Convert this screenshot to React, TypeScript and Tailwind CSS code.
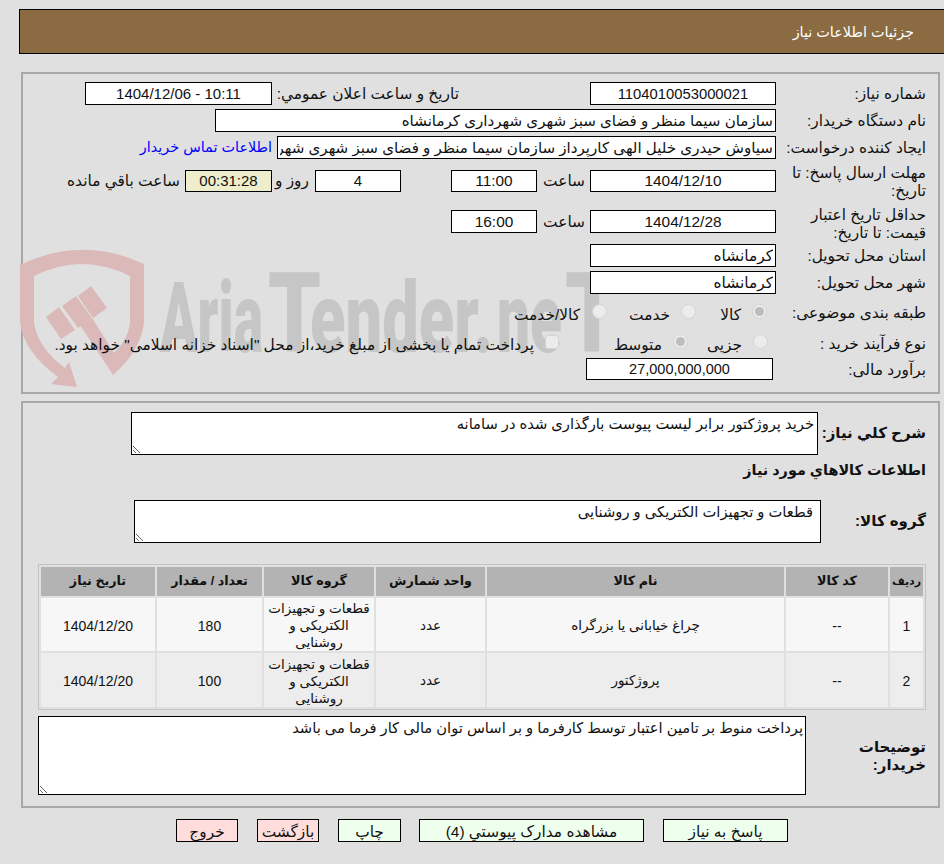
const font = "font-['Tahoma','Liberation_Sans','DejaVu_Sans',sans-serif]";

function Field({ value, short, yellow, className = '' }: { value: string; short?: boolean; yellow?: boolean; className?: string }) {
  return (
    <input
      readOnly
      value={value}
      className={`${short ? 'h-[22px]' : 'h-[23px]'} ${yellow ? 'bg-[#eeeecc]' : 'bg-white'} shrink-0 border border-black px-[2px] outline-none ${className}`}
    />
  );
}

function Label({ children, className = 'leading-[23px]' }: { children: React.ReactNode; className?: string }) {
  return <div className={`w-[150px] shrink-0 pl-[10px] ${className}`}>{children}</div>;
}

function Radio({ checked }: { checked?: boolean }) {
  return (
    <span className="mt-[4px] flex h-[15px] w-[15px] shrink-0 items-center justify-center rounded-full border border-[#d4d4d4] bg-[#ececec]">
      {checked && <span className="h-[9px] w-[9px] rounded-full bg-[#bdbdbd]" />}
    </span>
  );
}

// logo behind the first panel
function Watermark() {
  return (
    <svg className="pointer-events-none absolute left-[-3px] top-[166px]" width="620" height="150" viewBox="0 0 620 150">
      <g fill="#dcb9b9">
        <path d="M0 25 Q62 -5 124 24 L124 83 Q120 112 93 135 L60 85 L72 78 L94 113 Q108 100 110 83 L110 36 Q62 12 14 36 L14 83 Q18 108 45 128 L49 122 L57 147 L31 144 L38 137 Q4 112 0 83 Z" />
        <path d="M26 77 L39 67 L55 90 L41 99 Z" />
        <path d="M42 66 L56 56 L72 78 L58 88 Z" />
        <path d="M58 56 L71 46 L87 68 L73 78 Z" />
      </g>
      <g direction="ltr" fill="#c6c6c6" fontFamily="Roboto" fontWeight="900" fontSize="98">
        <text x="140" y="112" textLength="103" lengthAdjust="spacingAndGlyphs">Aria</text>
        <text x="248" y="112" fontSize="112" textLength="53" lengthAdjust="spacingAndGlyphs">T</text>
        <text x="290" y="112" textLength="183" lengthAdjust="spacingAndGlyphs">ender.</text>
        <text x="477" y="112" textLength="65" lengthAdjust="spacingAndGlyphs">ne</text>
        <text x="545" y="112" fontSize="112" textLength="54" lengthAdjust="spacingAndGlyphs">T</text>
      </g>
    </svg>
  );
}

const rows = [
  { n: '1', name: 'چراغ خیابانی یا بزرگراه', qty: '180' },
  { n: '2', name: 'پروژکتور', qty: '100' },
];

export default function App() {
  return (
    <div dir="rtl" className={`${font} relative h-[864px] w-[944px] overflow-hidden bg-[#e0e0e0] text-[15.4px] text-[#111]`}>
      <div className="ml-[19px] mt-[9px] h-[45px] border border-r-0 border-black bg-[#8b6b42] pr-[30px] text-[14.4px] leading-[44px] text-white">
        جزئیات اطلاعات نیاز
      </div>

      {/* top panel */}
      <div className="relative ml-[21px] mr-[4px] mt-[18px] h-[322px] border-2 border-[#a8a8a8] pr-[12px] pt-[8px]">
        <Watermark />
        <div className="relative flex flex-col">
          <div className="flex h-[27px] items-start">
            <Label>شماره نیاز:</Label>
            <Field value="1104010053000021" className="w-[186px] text-center text-[14.8px]" />
            <div className="mr-[131px] w-[181px] whitespace-nowrap leading-[23px]">تاریخ و ساعت اعلان عمومي:</div>
            <Field value="10:11 - 1404/12/06" className="mr-[6px] w-[187px] text-center text-[15px]" />
          </div>
          <div className="flex h-[27px] items-start">
            <Label>نام دستگاه خریدار:</Label>
            <Field value="سازمان سیما منظر و فضای سبز شهری شهرداری کرمانشاه" className="w-[561px] text-[15.1px]" />
          </div>
          <div className="flex h-[34px] items-start">
            <Label>ایجاد کننده درخواست:</Label>
            <Field value="سیاوش حیدری خلیل الهی کارپرداز سازمان سیما منظر و فضای سبز شهری شهرداری کرمانشاه" className="w-[499px] text-[15.1px]" />
            <a className="mr-[5px] whitespace-nowrap text-[14.4px] leading-[23px] text-[#0000ff]">اطلاعات تماس خریدار</a>
          </div>
          <div className="flex h-[40px] items-start">
            <Label className="mt-[-6px] leading-[18px]">مهلت ارسال پاسخ: تا تاریخ:</Label>
            <Field short value="1404/12/10" className="w-[186px] text-center" />
            <div className="mr-[5px] w-[48px] leading-[22px]">ساعت</div>
            <Field short value="11:00" className="w-[86px] text-center" />
            <Field short value="4" className="mr-[50px] w-[86px] text-center text-[15px]" />
            <div className="mr-[6px] w-[33px] whitespace-nowrap leading-[22px]">روز و</div>
            <Field short yellow value="00:31:28" className="mr-[4px] w-[87px] text-center text-[15px]" />
            <div className="mr-[5px] whitespace-nowrap leading-[22px]">ساعت باقي مانده</div>
          </div>
          <div className="flex h-[34px] items-start">
            <Label className="mt-[-4px] leading-[18px]">حداقل تاریخ اعتبار قیمت: تا تاریخ:</Label>
            <Field value="1404/12/28" className="w-[186px] text-center" />
            <div className="mr-[5px] w-[48px] leading-[23px]">ساعت</div>
            <Field value="16:00" className="w-[86px] text-center" />
          </div>
          <div className="flex h-[27px] items-start">
            <Label>استان محل تحویل:</Label>
            <Field value="کرمانشاه" className="w-[186px]" />
          </div>
          <div className="flex h-[29px] items-start">
            <Label>شهر محل تحویل:</Label>
            <Field value="کرمانشاه" className="w-[186px]" />
          </div>
          <div className="flex h-[30px] items-start">
            <Label className="mt-[1px] leading-[23px]">طبقه بندی موضوعی:</Label>
            <div className="mr-[9px] flex"><Radio checked /></div>
            <div className="mr-[11px] mt-[4px] w-[45px] leading-[22px]">کالا</div>
            <Radio />
            <div className="mr-[11px] mt-[4px] w-[63px] leading-[22px]">خدمت</div>
            <Radio />
            <div className="mr-[12px] mt-[4px] whitespace-nowrap leading-[22px]">کالا/خدمت</div>
          </div>
          <div className="flex h-[28px] items-start">
            <Label className="mt-[2px] leading-[23px]">نوع فرآیند خرید :</Label>
            <div className="mr-[8px] flex"><Radio /></div>
            <div className="mr-[11px] mt-[4px] w-[54px] leading-[22px]">جزیی</div>
            <Radio checked />
            <div className="mr-[11px] mt-[4px] w-[103px] leading-[22px]">متوسط</div>
            <span className="mt-[5px] h-[14px] w-[14px] shrink-0 rounded-[3px] border border-[#d4d4d4] bg-[#ececec]" />
            <div className="mr-[11px] mt-[4px] whitespace-nowrap leading-[22px]">پرداخت تمام یا بخشی از مبلغ خرید،از محل "اسناد خزانه اسلامی" خواهد بود.</div>
          </div>
          <div className="flex items-start">
            <Label>برآورد مالی:</Label>
            <Field short value="27,000,000,000" className="mr-[3px] w-[187px] text-center text-[14.5px]" />
          </div>
        </div>
      </div>

      {/* details panel */}
      <div className="ml-[21px] mr-[4px] mt-[7px] h-[407px] border-2 border-[#a8a8a8] pr-[12px] pt-[9px]">
        <div className="flex h-[43px] items-center">
          <div className="w-[108px] shrink-0 text-[15px] font-bold">شرح کلي نیاز:</div>
          <textarea readOnly value="خرید پروژکتور برابر لیست پیوست بارگذاری شده در سامانه" className="h-[43px] w-[687px] border border-black bg-white px-[3px] text-[14.7px] outline-none" />
        </div>
        <div className="mt-[5px] h-[40px] text-[14.4px] font-bold leading-[20px]">اطلاعات کالاهاي مورد نیاز</div>
        <div className="flex h-[43px] items-center">
          <div className="w-[105px] shrink-0 text-[15px] font-bold">گروه کالا:</div>
          <textarea readOnly value="قطعات و تجهیزات الکتریکی و روشنایی" className="h-[43px] w-[687px] border border-black bg-white px-[7px] text-[14.7px] outline-none" />
        </div>
        <table className="mt-[21px] w-[888px] table-fixed border-separate border-spacing-[2px] border border-[#c4c4c4] text-center text-[13.5px]">
          <thead>
            <tr className="h-[29px] bg-[#b3b3b3] text-[12.7px] font-bold">
              <th className="w-[33px] p-0 text-[11px]">ردیف</th>
              <th className="w-[102px] p-0">کد کالا</th>
              <th className="w-[297px] p-0">نام کالا</th>
              <th className="w-[109px] p-0">واحد شمارش</th>
              <th className="w-[110px] p-0">گروه کالا</th>
              <th className="w-[105px] p-0">تعداد / مقدار</th>
              <th className="p-0">تاریخ نیاز</th>
            </tr>
          </thead>
          <tbody>
            {rows.map((row, i) => (
              <tr key={row.n} className={i === 0 ? 'h-[53px] bg-[#f7f7f7]' : 'h-[54px] bg-[#ededed]'}>
                <td className="px-0 pb-0 pt-[3px] text-[14px]">{row.n}</td>
                <td className="px-0 pb-0 pt-[3px] text-[14px]">--</td>
                <td className="px-0 pb-0 pt-[3px]">{row.name}</td>
                <td className="px-0 pb-0 pt-[3px]">عدد</td>
                <td className="px-[2px] pb-0 pt-[2px] leading-[17px]">قطعات و تجهیزات الکتریکی و روشنایی</td>
                <td className="px-0 pb-0 pt-[3px] text-[14px]">{row.qty}</td>
                <td className="px-0 pb-0 pt-[3px] text-[14px]">1404/12/20</td>
              </tr>
            ))}
          </tbody>
        </table>
        <div className="mt-[6px] flex items-center">
          <div className="w-[120px] shrink-0 pl-[30px] text-[15px] font-bold leading-[18px]">توضیحات خریدار:</div>
          <textarea readOnly value="پرداخت منوط بر تامین اعتبار توسط کارفرما و بر اساس توان مالی کار فرما می باشد" className="h-[79px] w-[768px] border border-black bg-white px-[2px] text-[14.7px] outline-none" />
        </div>
      </div>

      {/* actions */}
      <div className="mr-[156px] mt-[11px] flex">
        <button className="h-[23px] w-[125px] border border-black bg-[#eeffee]">پاسخ به نیاز</button>
        <button className="mr-[19px] h-[23px] w-[225px] border border-black bg-[#eeffee]">مشاهده مدارک پیوستي (4)</button>
        <button className="mr-[18px] h-[23px] w-[63px] border border-black bg-[#eeffee]">چاپ</button>
        <button className="mr-[19px] h-[23px] w-[62px] border border-black bg-[#ffdddd]">بازگشت</button>
        <button className="mr-[19px] h-[23px] w-[62px] border border-black bg-[#ffdddd]">خروج</button>
      </div>
    </div>
  );
}
